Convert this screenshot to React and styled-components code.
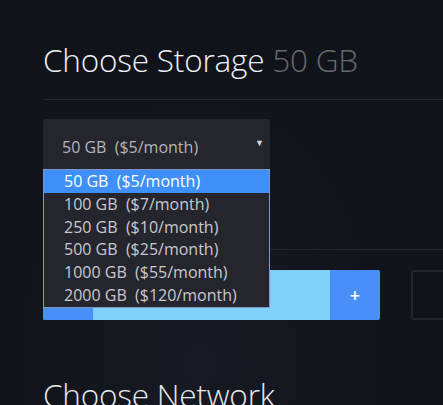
import React from 'react'
import styled, { createGlobalStyle } from 'styled-components'

const OPTIONS = [
  { size: '50 GB', price: '($5/month)' },
  { size: '100 GB', price: '($7/month)' },
  { size: '250 GB', price: '($10/month)' },
  { size: '500 GB', price: '($25/month)' },
  { size: '1000 GB', price: '($55/month)' },
  { size: '2000 GB', price: '($120/month)' },
]

const GlobalStyle = createGlobalStyle`
  html, body {
    margin: 0;
    padding: 0;
    background: #10131a;
  }
  body {
    font-family: 'Open Sans', 'Noto Sans', sans-serif;
  }
`

const Page = styled.div`
  width: 443px;
  height: 405px;
  overflow: hidden;
  box-sizing: border-box;
  padding: 0 0 0 43px;
  background: radial-gradient(ellipse at 45% 90%, #171a22 0%, #10131a 60%);
`

const Heading = styled.h2`
  margin: 0;
  padding-top: 38px;
  font-size: 31.5px;
  font-weight: 300;
  line-height: 44px;
  color: #eef2f7;
  letter-spacing: -0.2px;
  white-space: nowrap;
`

const Amount = styled.span`
  color: #676869;
`

const Divider = styled.div`
  height: 1px;
  background: #24262d;
  margin-top: ${(p) => p.top}px;
`

const SelectWrap = styled.div`
  position: relative;
  width: 227px;
  margin-top: 19px;
`

const SelectBox = styled.div`
  height: 50px;
  box-sizing: border-box;
  background: #25252e;
  border-radius: 2px 2px 0 0;
  display: flex;
  align-items: center;
  justify-content: space-between;
  padding: 5px 6px 0 19px;
  color: #b4b4ba;
  font-size: 16px;
  white-space: pre;
`

const Arrow = styled.span`
  font-size: 9px;
  color: #d8d8dc;
  margin-top: -8px;
`

const List = styled.ul`
  position: absolute;
  top: 50px;
  left: 0;
  width: 227px;
  box-sizing: border-box;
  margin: 0;
  padding: 0;
  list-style: none;
  background: #25252e;
  border: 1px solid #8593c7;
  z-index: 2;
`

const Item = styled.li`
  height: 22.8px;
  line-height: 22.8px;
  padding-left: 20px;
  font-size: 16px;
  color: ${(p) => (p.active ? '#ffffff' : '#c9c9ce')};
  background: ${(p) => (p.active ? '#3f8ff8' : 'transparent')};
  white-space: pre;
`

const Row = styled.div`
  display: flex;
  align-items: stretch;
  margin-top: 20px;
  height: 50px;
`

const Track = styled.div`
  width: 287px;
  display: flex;
  background: #80d0fa;
  border-radius: 2px 0 0 2px;
  overflow: hidden;
`

const Fill = styled.div`
  width: 50px;
  background: #4a8ff8;
`

const PlusButton = styled.div`
  width: 50px;
  display: flex;
  align-items: center;
  justify-content: center;
  background: #4a8ff8;
  border-radius: 0 2px 2px 0;
  color: #ffffff;
  font-size: 18px;
  font-weight: 600;
`

const Outline = styled.div`
  margin-left: 31px;
  flex: 1;
  box-sizing: border-box;
  border: 2px solid #23262e;
  border-right: none;
  border-radius: 3px 0 0 3px;
`

const NextHeading = styled(Heading)`
  padding-top: 53px;
  color: #e6e8ec;
`

export default function App() {
  return (
    <>
      <GlobalStyle />
      <Page>
        <Heading>
          Choose Storage <Amount>50 GB</Amount>
        </Heading>
        <Divider top={17} />
        <SelectWrap>
          <SelectBox>
            <span>{'50 GB  ($5/month)'}</span>
            <Arrow>▼</Arrow>
          </SelectBox>
          <List>
            {OPTIONS.map((o, i) => (
              <Item key={o.size} active={i === 0}>
                {o.size + '  ' + o.price}
              </Item>
            ))}
          </List>
        </SelectWrap>
        <Divider top={80} />
        <Row>
          <Track>
            <Fill />
          </Track>
          <PlusButton>+</PlusButton>
          <Outline />
        </Row>
        <NextHeading>Choose Network</NextHeading>
      </Page>
    </>
  )
}
